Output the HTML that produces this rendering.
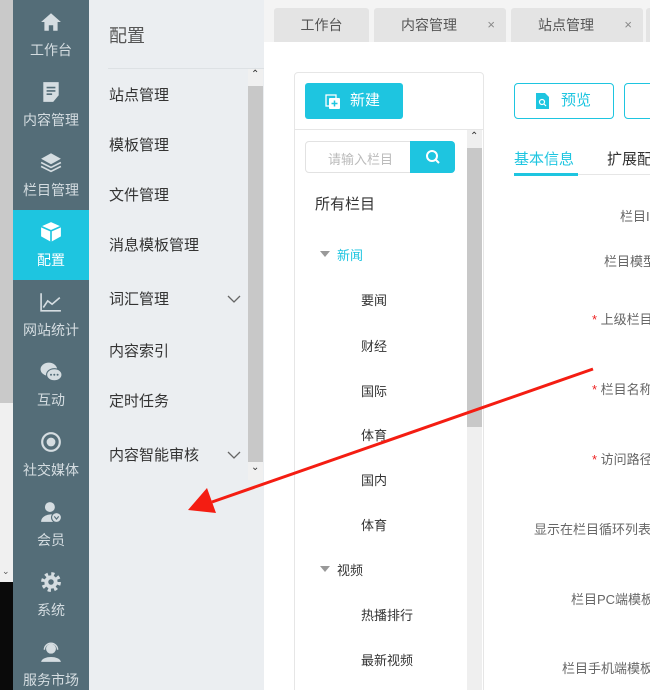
<!DOCTYPE html>
<html style="width:650px;height:690px;overflow:hidden"><head><meta charset="utf-8">
<style>
*{margin:0;padding:0;box-sizing:border-box}
body{width:650px;height:690px;overflow:hidden;position:relative;font-family:"Liberation Sans","Noto Sans CJK SC",sans-serif;background:#fff}
.a{position:absolute}
.nav{left:13px;top:0;width:76px;height:690px;background:#546d78}
.ni{position:absolute;left:0;width:76px;height:70px;color:#d5dde1;font-size:14px;text-align:center}
.ni svg{position:absolute;left:27px;top:11px;width:22px;height:22px}
.ni span{position:absolute;left:0;right:0;top:40px}
.sub{left:89px;top:0;width:175px;height:690px;background:#ebeef1}
.si{position:absolute;left:20px;font-size:15px;color:#333}
.tab{position:absolute;top:8px;height:34px;background:#e4e4e4;border-radius:3px 3px 0 0;font-size:14px;color:#555;line-height:34px}
.tree{position:absolute;left:361px;font-size:13px;color:#333}
.lbl{position:absolute;font-size:13px;color:#666;white-space:nowrap}
.req{color:#e22}
.tri{position:absolute;width:0;height:0;border-left:5px solid transparent;border-right:5px solid transparent;border-top:6px solid #999}
</style></head><body>
<div class="a" style="left:0;top:0;width:13px;height:403px;background:#c9c9c9"></div>
<div class="a" style="left:0;top:403px;width:13px;height:179px;background:#f0f0f0"></div>
<div class="a" style="left:2px;top:566px;font-size:9px;color:#555">⌄</div>
<div class="a" style="left:0;top:582px;width:13px;height:108px;background:#0a0a0a"></div>

<div class="a nav">
 <div class="ni" style="top:0"><svg viewBox="0 0 20 20"><path d="M10 2 L19 10 H16 V18 H12 V13 H8 V18 H4 V10 H1 Z" fill="#d5dde1"/></svg><span>工作台</span></div>
 <div class="ni" style="top:70px"><svg viewBox="0 0 20 20"><path d="M3 1 H17 V13 L12 19 H3 Z" fill="#d5dde1"/><path d="M6 6h8M6 9h8M6 12h5" stroke="#546d78" stroke-width="1.5"/></svg><span>内容管理</span></div>
 <div class="ni" style="top:140px"><svg viewBox="0 0 20 20"><path d="M10 2 L19 7 L10 12 L1 7Z" fill="#d5dde1"/><path d="M1 10.5 L10 15 L19 10.5 M1 14 L10 18.5 L19 14" stroke="#d5dde1" stroke-width="1.5" fill="none"/></svg><span>栏目管理</span></div>
 <div class="ni" style="top:210px;background:#1ec5e0;color:#fff"><svg viewBox="0 0 20 20"><path d="M10 1 L19 5 V14 L10 19 L1 14 V5Z" fill="#fff"/><path d="M1 5 L10 9 L19 5 M10 9 V19" stroke="#1ec5e0" stroke-width="1.5" fill="none"/></svg><span>配置</span></div>
 <div class="ni" style="top:280px"><svg viewBox="0 0 20 20"><path d="M1 2 V18 H19 M3 15 L7 9 L11 12 L18 6" stroke="#d5dde1" stroke-width="1.5" fill="none"/></svg><span>网站统计</span></div>
 <div class="ni" style="top:350px"><svg viewBox="0 0 20 20"><ellipse cx="8" cy="7.5" rx="7.5" ry="6" fill="#d5dde1"/><ellipse cx="13" cy="12.5" rx="7" ry="5.5" fill="#d5dde1" stroke="#546d78"/><circle cx="10" cy="12.5" r=".9" fill="#546d78"/><circle cx="13" cy="12.5" r=".9" fill="#546d78"/><circle cx="16" cy="12.5" r=".9" fill="#546d78"/></svg><span>互动</span></div>
 <div class="ni" style="top:420px"><svg viewBox="0 0 20 20"><circle cx="10" cy="10" r="8" stroke="#d5dde1" stroke-width="2" fill="none"/><circle cx="10" cy="10" r="4" fill="#d5dde1"/></svg><span>社交媒体</span></div>
 <div class="ni" style="top:490px"><svg viewBox="0 0 20 20"><circle cx="9" cy="5.5" r="4.5" fill="#d5dde1"/><path d="M1 19 C1 11 15 11 15 14 V19Z" fill="#d5dde1"/><circle cx="15" cy="15" r="4.5" fill="#d5dde1" stroke="#546d78"/><path d="M13 14 L15 16.5 L17 14" stroke="#546d78" fill="none"/></svg><span>会员</span></div>
 <div class="ni" style="top:560px"><svg viewBox="0 0 20 20"><circle cx="10" cy="10" r="7" fill="none" stroke="#d5dde1" stroke-width="4" stroke-dasharray="2.7 2.8"/><circle cx="10" cy="10" r="6" fill="#d5dde1"/><circle cx="10" cy="10" r="2.5" fill="#546d78"/></svg><span>系统</span></div>
 <div class="ni" style="top:630px"><svg viewBox="0 0 20 20"><circle cx="10" cy="7" r="4.5" fill="#d5dde1"/><path d="M4 8a6 6 0 0 1 12 0" stroke="#d5dde1" fill="none" stroke-width="1.3"/><path d="M1 19 C2 13 18 13 19 19Z" fill="#d5dde1"/></svg><span>服务市场</span></div>
</div>

<div class="a sub">
 <div class="a" style="left:20px;top:22px;font-size:18px;color:#555">配置</div>
 <div class="a" style="left:19px;top:68px;width:156px;height:1px;background:#dde1e4"></div>
 <div class="a" style="left:159px;top:69px;width:15px;height:411px;background:#f0f0f0"></div>
 <div class="a" style="left:159px;top:86px;width:15px;height:376px;background:#c8c8c8"></div>
 <div class="a" style="left:162px;top:69px;font-size:10px;color:#333">⌃</div>
 <div class="a" style="left:162px;top:462px;font-size:10px;color:#333">⌄</div>
 <div class="si" style="top:84px">站点管理</div>
 <div class="si" style="top:134px">模板管理</div>
 <div class="si" style="top:184px">文件管理</div>
 <div class="si" style="top:234px">消息模板管理</div>
 <div class="si" style="top:288px">词汇管理</div>
 <div class="si" style="top:340px">内容索引</div>
 <div class="si" style="top:390px">定时任务</div>
 <div class="si" style="top:444px">内容智能审核</div>
 <svg class="a" style="left:137px;top:294px" width="16" height="10"><path d="M2 2 L8 8 L14 2" stroke="#666" fill="none" stroke-width="1.3"/></svg>
 <svg class="a" style="left:137px;top:450px" width="16" height="10"><path d="M2 2 L8 8 L14 2" stroke="#666" fill="none" stroke-width="1.3"/></svg>
</div>

<div class="a" style="left:264px;top:0;width:386px;height:42px;background:#f4f4f4"></div>
<div class="tab" style="left:274px;width:95px;text-align:center">工作台</div>
<div class="tab" style="left:374px;width:132px;padding-left:27px">内容管理<span style="position:absolute;right:11px;color:#888;font-size:13px">×</span></div>
<div class="tab" style="left:511px;width:132px;padding-left:27px">站点管理<span style="position:absolute;right:11px;color:#888;font-size:13px">×</span></div>
<div class="tab" style="left:646px;width:10px"></div>

<div class="a" style="left:294px;top:72px;width:190px;height:630px;border:1px solid #e6e6e6;border-radius:4px"></div>
<div class="a" style="left:295px;top:129px;width:189px;height:1px;background:#e6e6e6"></div>
<div class="a" style="left:305px;top:83px;width:98px;height:36px;background:#1ec5e0;border-radius:3px;color:#fff;font-size:15px;line-height:36px;padding-left:45px">新建</div>
<svg class="a" style="left:325px;top:94px" width="16" height="16"><rect x="1" y="1" width="10" height="11" fill="none" stroke="#fff" stroke-width="1.3"/><rect x="4" y="4" width="11" height="11" rx="1" fill="#fff"/><path d="M9.5 6.5v6M6.5 9.5h6" stroke="#1ec5e0" stroke-width="1.5"/></svg>
<div class="a" style="left:305px;top:141px;width:150px;height:32px;border:1px solid #e2e2e2;border-radius:4px"></div>
<div class="a" style="left:328px;top:149px;font-size:13px;color:#bbb">请输入栏目</div>
<div class="a" style="left:410px;top:141px;width:45px;height:32px;background:#1ec5e0;border-radius:0 4px 4px 0"></div>
<svg class="a" style="left:425px;top:149px" width="16" height="16"><circle cx="7" cy="7" r="5" stroke="#fff" stroke-width="2" fill="none"/><path d="M11 11 L14 14" stroke="#fff" stroke-width="2"/></svg>
<div class="a" style="left:467px;top:130px;width:15px;height:560px;background:#efefef"></div>
<div class="a" style="left:467px;top:148px;width:15px;height:279px;background:#c8c8c8"></div>
<div class="a" style="left:470px;top:131px;font-size:10px;color:#333">⌃</div>
<div class="a" style="left:315px;top:193px;font-size:15px;color:#333">所有栏目</div>
<div class="tri" style="left:320px;top:251px"></div>
<div class="a" style="left:337px;top:245px;font-size:13px;color:#1ec5e0">新闻</div>
<div class="tree" style="top:290px">要闻</div>
<div class="tree" style="top:336px">财经</div>
<div class="tree" style="top:381px">国际</div>
<div class="tree" style="top:425px">体育</div>
<div class="tree" style="top:470px">国内</div>
<div class="tree" style="top:515px">体育</div>
<div class="tri" style="left:320px;top:566px"></div>
<div class="a" style="left:337px;top:560px;font-size:13px;color:#333">视频</div>
<div class="tree" style="top:605px">热播排行</div>
<div class="tree" style="top:650px">最新视频</div>

<div class="a" style="left:514px;top:83px;width:100px;height:36px;border:1px solid #1ec5e0;border-radius:4px;color:#1ec5e0;font-size:15px;line-height:34px;padding-left:46px">预览</div>
<svg class="a" style="left:536px;top:93px" width="14" height="16"><path d="M0 0 H9 L13 4 V16 H0Z" fill="#1ec5e0"/><circle cx="6" cy="9" r="2.5" stroke="#fff" fill="none" stroke-width="1.2"/><path d="M8 11 L10 13" stroke="#fff" stroke-width="1.2"/></svg>
<div class="a" style="left:624px;top:83px;width:40px;height:36px;border:1px solid #1ec5e0;border-radius:4px"></div>
<div class="a" style="left:514px;top:148px;font-size:15px;color:#1ec5e0">基本信息</div>
<div class="a" style="left:607px;top:148px;font-size:15px;color:#333;white-space:nowrap">扩展配置</div>
<div class="a" style="left:514px;top:174px;width:136px;height:1px;background:#e6e6e6"></div>
<div class="a" style="left:514px;top:173px;width:64px;height:3px;background:#1ec5e0"></div>

<div class="a" style="left:480px;top:0;width:170px;height:690px;overflow:hidden">
 <div class="lbl" style="left:140px;top:206px">栏目ID</div>
 <div class="lbl" style="left:124px;top:251px">栏目模型</div>
 <div class="lbl" style="left:112px;top:309px"><span class="req">* </span>上级栏目</div>
 <div class="lbl" style="left:112px;top:379px"><span class="req">* </span>栏目名称</div>
 <div class="lbl" style="left:112px;top:449px"><span class="req">* </span>访问路径</div>
 <div class="lbl" style="left:54px;top:519px">显示在栏目循环列表</div>
 <div class="lbl" style="left:91px;top:589px">栏目PC端模板</div>
 <div class="lbl" style="left:82px;top:658px">栏目手机端模板</div>
</div>

<svg class="a" style="left:0;top:0" width="650" height="690"><path d="M593 369 L212 502" stroke="#f41d12" stroke-width="3"/><path d="M188 510 L207 488 L216 513Z" fill="#f41d12"/></svg>
</body></html>
